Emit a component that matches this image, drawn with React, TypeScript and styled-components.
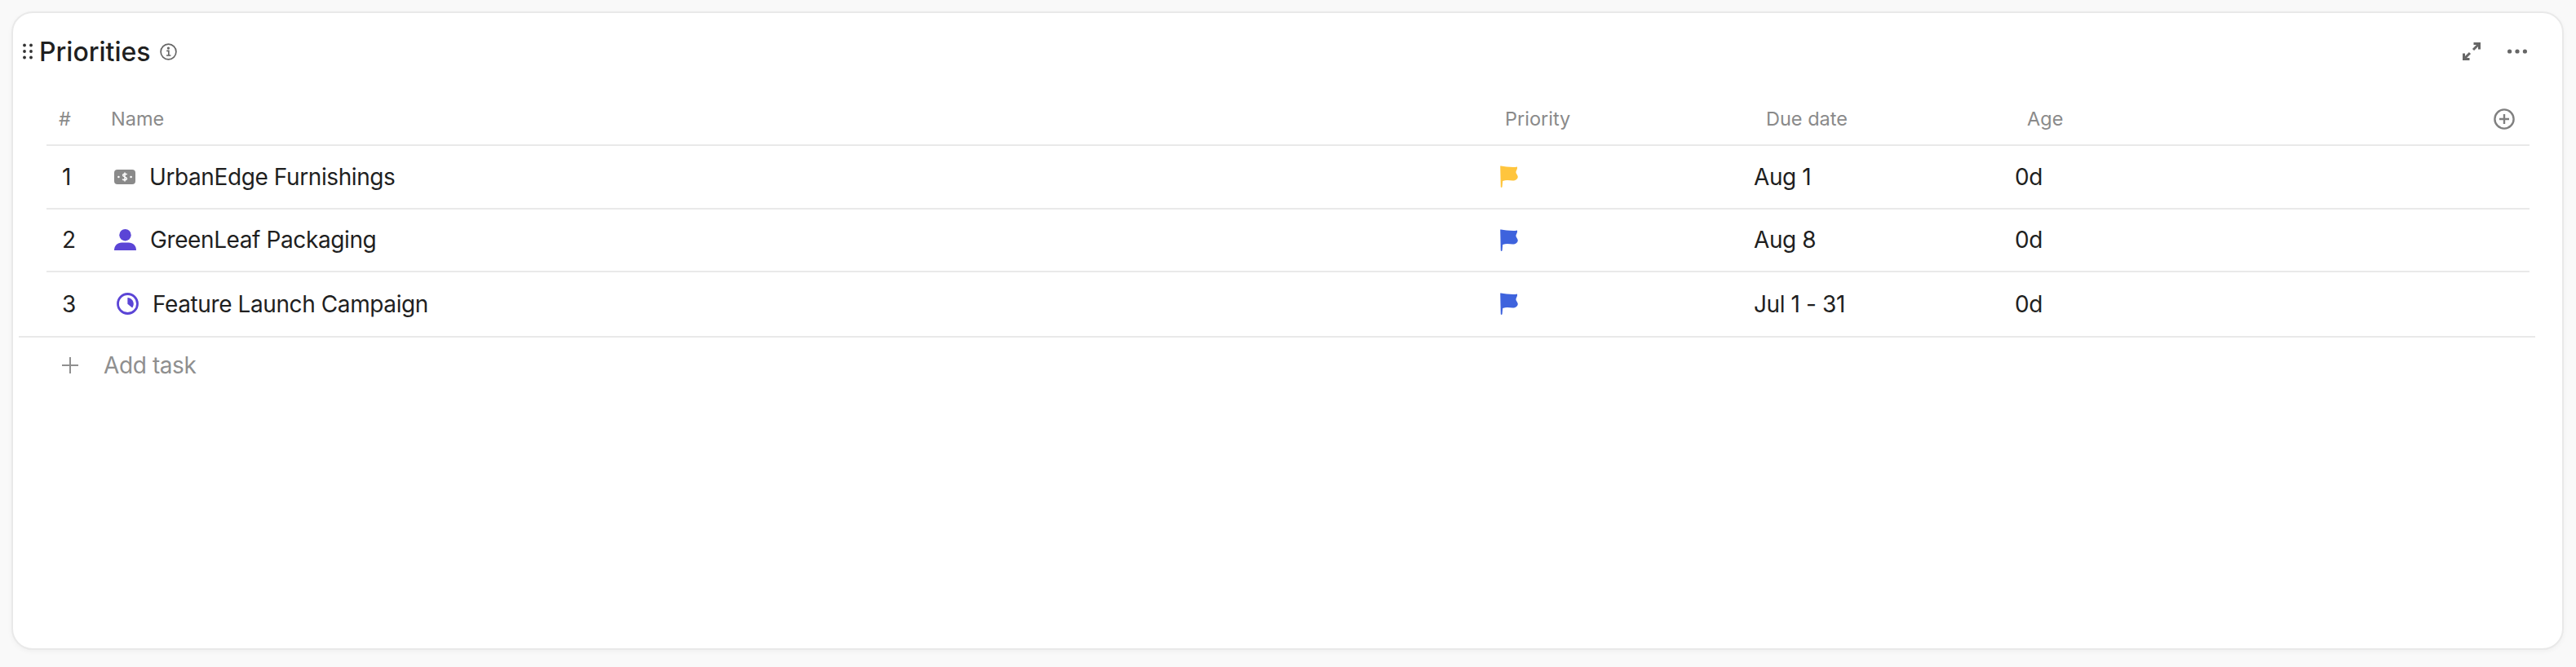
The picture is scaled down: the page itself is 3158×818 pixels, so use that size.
import styled, { createGlobalStyle } from 'styled-components';

const COLUMNS = '74px 1698px 320px 320px 1fr';

const tasks = [
  { id: 1, name: 'UrbanEdge Furnishings', kind: 'deal', flag: '#FFC53D', due: 'Aug 1', age: '0d' },
  { id: 2, name: 'GreenLeaf Packaging', kind: 'contact', flag: '#3E63DD', due: 'Aug 8', age: '0d' },
  { id: 3, name: 'Feature Launch Campaign', kind: 'project', flag: '#3E63DD', due: 'Jul 1 - 31', age: '0d' },
];

function DragIcon() {
  return (
    <svg width="12" height="20" viewBox="0 0 12 20" fill="#333">
      <circle cx="2" cy="2.5" r="1.9" />
      <circle cx="10" cy="2.5" r="1.9" />
      <circle cx="2" cy="10" r="1.9" />
      <circle cx="10" cy="10" r="1.9" />
      <circle cx="2" cy="17.5" r="1.9" />
      <circle cx="10" cy="17.5" r="1.9" />
    </svg>
  );
}

function InfoIcon() {
  return (
    <svg width="21" height="21" viewBox="0 0 21 21" fill="none" stroke="#666" strokeWidth="1.7">
      <circle cx="10.5" cy="10.5" r="9.4" />
      <path d="M8.2 9.3h2.6v5.6M8 15h5.4" />
      <circle cx="10.4" cy="6.1" r="0.8" fill="#666" />
    </svg>
  );
}

function ExpandIcon() {
  return (
    <svg width="22" height="22" viewBox="0 0 22 22" fill="none" stroke="#666" strokeWidth="3">
      <path d="M13 9l7-7M13.5 1.5H20.5V8.5" />
      <path d="M9 13l-7 7M1.5 13.5V20.5H8.5" />
    </svg>
  );
}

function MoreIcon() {
  return (
    <svg width="24" height="6" viewBox="0 0 24 6" fill="#666">
      <circle cx="2.6" cy="3" r="2.6" />
      <circle cx="12" cy="3" r="2.6" />
      <circle cx="21.4" cy="3" r="2.6" />
    </svg>
  );
}

function AddCircleIcon() {
  return (
    <svg width="26" height="26" viewBox="0 0 26 26" fill="none" stroke="#808080" strokeWidth="2.4">
      <circle cx="13" cy="13" r="11.6" />
      <path d="M13 7v12M7 13h12" />
    </svg>
  );
}

function PlusIcon() {
  return (
    <svg width="20" height="20" viewBox="0 0 20 20" fill="none" stroke="#8f8f8f" strokeWidth="2">
      <path d="M10 0v20M0 10h20" />
    </svg>
  );
}

function FlagIcon({ color }: { color: string }) {
  return (
    <svg width="22" height="27" viewBox="0 0 22 27" fill={color}>
      <path d="M0.2 0.6C2.6 0.2 5 1.4 8 1.6C12 1.8 17 2.6 20.8 1.6C21.8 3.6 20 5.6 19.4 8C19.4 10 21.6 11.6 21.8 13.8C21.6 16.8 18.6 18.8 15.4 18.6C11.6 18.2 7.4 17.4 3.2 19L2.6 26.2C2.2 27.2 1 27.2 0.8 26.2Z" />
    </svg>
  );
}

function TaskIcon({ kind }: { kind: string }) {
  if (kind === 'deal') {
    return (
      <svg width="26" height="18" viewBox="0 0 26 18">
        <rect width="26" height="18" rx="4" fill="#8a8a8a" />
        <circle cx="5.4" cy="9" r="1.3" fill="#fff" />
        <circle cx="20.6" cy="9" r="1.3" fill="#fff" />
        <path d="M15.6 6.2C15 5 11 4.6 10.6 6.6C10.3 9.2 15.8 8.6 15.4 11.4C15 13.4 11 13 10.2 11.6M13 3.4v11.2" fill="none" stroke="#fff" strokeWidth="1.5" />
      </svg>
    );
  }
  if (kind === 'contact') {
    return (
      <svg width="27" height="26" viewBox="0 0 27 26" fill="#5B45D6">
        <circle cx="13.5" cy="7.2" r="7.2" />
        <path d="M0 26C0 20 4 16.4 9.4 16.4H17.6C23 16.4 27 20 27 26Z" />
      </svg>
    );
  }
  return (
    <svg width="27" height="27" viewBox="0 0 27 27">
      <circle cx="13.5" cy="13.5" r="12" fill="none" stroke="#5B45D6" strokeWidth="2.8" />
      <path d="M13.4 6C17.6 6.4 20.6 9.6 20.8 13.6C20.8 15.4 20.2 17 19.2 18.4L13.4 13.8Z" fill="#5B45D6" />
    </svg>
  );
}

export default function App() {
  return (
    <Page>
      <GlobalStyle />
      <Card>
        <CardHeader>
          <TitleGroup>
            <DragIcon />
            <Title>Priorities</Title>
            <InfoIcon />
          </TitleGroup>
          <Actions>
            <ExpandIcon />
            <MoreIcon />
          </Actions>
        </CardHeader>

        <Table>
          <HeadRow>
            <HeadCell $inset={15}>#</HeadCell>
            <HeadCell $inset={5}>Name</HeadCell>
            <HeadCell $inset={16}>Priority</HeadCell>
            <HeadCell $inset={16}>Due date</HeadCell>
            <AddColumn>
              <HeadCell $inset={16}>Age</HeadCell>
              <AddCircleIcon />
            </AddColumn>
          </HeadRow>

          {tasks.map((task) => (
            <Row key={task.id}>
              <NumberCell>{task.id}</NumberCell>
              <NameCell>
                <IconSlot $indent={task.kind === 'project' ? 3 : 0}>
                  <TaskIcon kind={task.kind} />
                </IconSlot>
                {task.name}
              </NameCell>
              <FlagCell>
                <FlagIcon color={task.flag} />
              </FlagCell>
              <Cell>{task.due}</Cell>
              <Cell>{task.age}</Cell>
            </Row>
          ))}
        </Table>

        <AddTask>
          <PlusIcon />
          Add task
        </AddTask>
      </Card>
    </Page>
  );
}

const GlobalStyle = createGlobalStyle`
  html,
  body {
    margin: 0;
    background-color: #f9f9f9;
  }
`;

const Page = styled.div`
  box-sizing: border-box;
  height: 818px;
  padding: 14px 15px 21px 14px;

  font-family: Inter, 'Liberation Sans', sans-serif;
  color: #1f1f1f;
`;

const Card = styled.div`
  box-sizing: border-box;
  height: 100%;

  border: solid 2px #e9e9e9;
  border-radius: 26px;
  background-color: #ffffff;
  box-shadow: 0 2px 6px rgba(0, 0, 0, 0.04);
`;

const CardHeader = styled.div`
  display: flex;
  align-items: center;
  justify-content: space-between;

  height: 94px;
  padding: 0 43px 0 12px;
`;

const TitleGroup = styled.div`
  display: flex;
  align-items: center;
`;

const Title = styled.h2`
  margin: 0 11px 0 8px;

  font-size: 32px;
  font-weight: 500;
  color: #1f1f1f;
`;

const Actions = styled.div`
  display: flex;
  align-items: center;
  gap: 33px;
`;

const Table = styled.div`
  margin: 0 40px 0 41px;
`;

const HeadRow = styled.div`
  display: grid;
  grid-template-columns: ${COLUMNS};
  align-items: center;

  box-sizing: border-box;
  height: 69px;
  padding-top: 4px;
  border-bottom: solid 2px #e9e9e9;
`;

const HeadCell = styled.div<{ $inset: number }>`
  padding-left: ${({ $inset }) => $inset}px;

  font-size: 23.5px;
  color: #8a8a8a;
`;

const AddColumn = styled.div`
  display: flex;
  align-items: center;
  justify-content: space-between;

  padding-right: 18px;
`;

const Row = styled.div`
  display: grid;
  grid-template-columns: ${COLUMNS};
  align-items: center;

  box-sizing: border-box;
  height: 77.5px;
  border-bottom: solid 2px #e9e9e9;

  font-size: 28px;
  letter-spacing: -0.4px;

  &:last-child {
    border-bottom: none;
  }
`;

const Cell = styled.div`
  padding-left: 1px;
`;

const NumberCell = styled.div`
  padding-left: 19px;
`;

const NameCell = styled.div`
  display: flex;
  align-items: center;
  gap: 17px;

  padding-left: 9px;
`;

const IconSlot = styled.div<{ $indent: number }>`
  display: flex;

  margin-left: ${({ $indent }) => $indent}px;
`;

const FlagCell = styled.div`
  display: flex;

  padding-left: 10px;
`;

const AddTask = styled.div`
  display: flex;
  align-items: center;
  gap: 31px;

  box-sizing: border-box;
  height: 70px;
  margin: 0 33px 0 7px;
  padding-left: 53px;
  border-top: solid 2px #e9e9e9;

  font-size: 28px;
  letter-spacing: -0.4px;
  color: #8f8f8f;
`;
